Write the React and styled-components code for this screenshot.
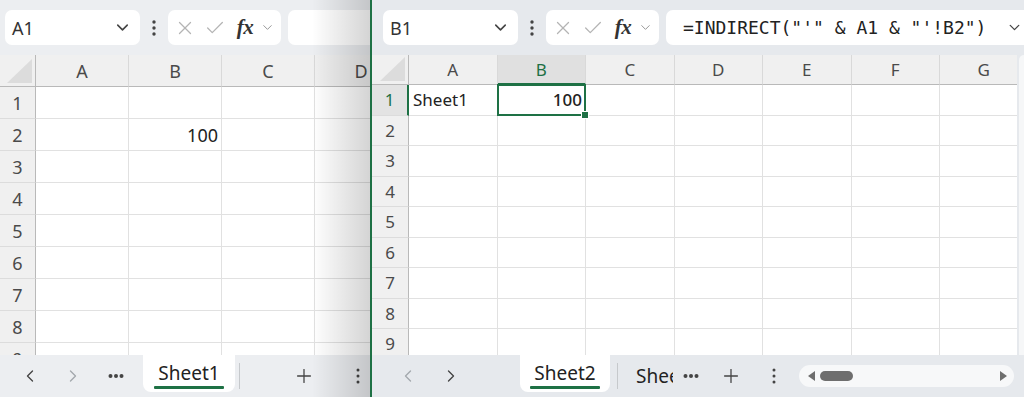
import React from "react";
import styled, { createGlobalStyle } from "styled-components";
import { ChevronDown, ChevronLeft, ChevronRight, X, Check, Plus } from "lucide-react";

const GREEN = "#1e7145";

const GlobalStyle = createGlobalStyle`
  html, body { margin: 0; padding: 0; }
  body {
    font-family: "Noto Sans", "Open Sans", sans-serif;
    background: #e7eaee;
    overflow: hidden;
  }
`;

const Screen = styled.div`
  display: flex;
  width: 1024px;
  height: 397px;
  overflow: hidden;
`;

const Window = styled.div`
  position: relative;
  display: flex;
  flex-direction: column;
  flex: none;
  width: ${(p) => p.$width}px;
  background: ${(p) => p.$bg};
  overflow: hidden;
`;

const Divider = styled.div`
  flex: none;
  width: 2px;
  background: ${GREEN};
`;

// shadow thrown by the window in front
const EdgeShade = styled.div`
  position: absolute;
  top: 0;
  right: 0;
  bottom: 0;
  width: 58px;
  background: linear-gradient(to right, rgba(0, 0, 0, 0), rgba(0, 0, 0, 0.17));
  pointer-events: none;
`;

const Toolbar = styled.div`
  flex: none;
  display: flex;
  align-items: center;
  height: 55px;
  padding: 10px 0 10px ${(p) => p.$pad}px;
  box-sizing: border-box;
`;

const NameBox = styled.div`
  flex: none;
  display: flex;
  align-items: center;
  justify-content: space-between;
  width: 135px;
  height: 35px;
  padding: 0 8px 0 7px;
  box-sizing: border-box;
  background: #fff;
  border-radius: 7px;
  font-size: 18px;
  color: #333;
`;

const KebabSlot = styled.div`
  flex: none;
  width: 28px;
  display: flex;
  justify-content: center;
  color: #444;
`;

const FormulaButtons = styled.div`
  flex: none;
  display: flex;
  align-items: center;
  width: 113px;
  height: 35px;
  padding: 0 4px;
  box-sizing: border-box;
  background: #fff;
  border-radius: 7px;
`;

const IconSlot = styled.div`
  width: ${(p) => p.$w}px;
  display: flex;
  justify-content: center;
  align-items: center;
  color: ${(p) => p.$color || "#b4b4b4"};
`;

const Fx = styled.span`
  font-family: "Liberation Serif", "DejaVu Serif", serif;
  font-style: italic;
  font-weight: bold;
  font-size: 21px;
  color: #333;
  letter-spacing: -0.5px;
`;

const FormulaInput = styled.div`
  flex: 1;
  min-width: 0;
  display: flex;
  align-items: center;
  justify-content: space-between;
  height: 35px;
  margin-left: 7px;
  padding: 0 0 0 17px;
  box-sizing: border-box;
  background: #fff;
  border-radius: 7px 0 0 7px;
  color: #555;
`;

const FormulaText = styled.span`
  font-family: "DejaVu Sans Mono", "Liberation Mono", monospace;
  font-size: 18px;
  color: #222;
  white-space: pre;
`;

const Body = styled.div`
  flex: 1;
  min-height: 0;
  display: flex;
`;

const Sheet = styled.div`
  flex: 1;
  min-width: 0;
  display: grid;
  overflow: hidden;
  align-content: start;
  grid-template-columns: ${(p) => p.$head}px repeat(${(p) => p.$cols}, ${(p) => p.$colW}px);
  grid-template-rows: ${(p) => p.$headH}px;
  grid-auto-rows: ${(p) => p.$rowH}px;
  background: #fff;
  font-size: ${(p) => p.$font}px;
`;

const VTrack = styled.div`
  flex: none;
  width: 5px;
  margin-left: 2px;
  background: #f6f7f8;
  border-radius: 8px 0 0 0;
`;

const Corner = styled.div`
  position: relative;
  background: #f0f0f0;
  border-right: 1px solid #b9b9b9;
  border-bottom: 1px solid #b9b9b9;

  &::after {
    content: "";
    position: absolute;
    right: 3px;
    bottom: 3px;
    width: 25px;
    height: 24px;
    background: #dcdcdc;
    clip-path: polygon(100% 0, 100% 100%, 0 100%);
  }
`;

const ColHead = styled.div`
  display: flex;
  align-items: center;
  justify-content: center;
  background: ${(p) => (p.$active ? "#e0e0e0" : "#f0f0f0")};
  color: ${(p) => (p.$active ? GREEN : "#4a4a4a")};
  border-right: 1px solid #d9d9d9;
  border-bottom: ${(p) => (p.$active ? `2px solid ${GREEN}` : "1px solid #b9b9b9")};
  box-sizing: border-box;
`;

const RowHead = styled.div`
  display: flex;
  align-items: center;
  justify-content: center;
  background: ${(p) => (p.$active ? "#e3e3e3" : "#f0f0f0")};
  color: ${(p) => (p.$active ? GREEN : "#4a4a4a")};
  border-right: ${(p) => (p.$active ? `2px solid ${GREEN}` : "1px solid #b9b9b9")};
  border-bottom: 1px solid #dcdcdc;
  box-sizing: border-box;
`;

const Cell = styled.div`
  position: relative;
  display: flex;
  align-items: center;
  justify-content: ${(p) => (p.$right ? "flex-end" : "flex-start")};
  padding: 0 3px 0 4px;
  border-right: 1px solid #e1e1e1;
  border-bottom: 1px solid #e1e1e1;
  box-sizing: border-box;
  color: #222;
  font-weight: ${(p) => (p.$bold ? 500 : 400)};
  white-space: nowrap;
  z-index: ${(p) => (p.$selected ? 2 : 0)};

  ${(p) =>
    p.$selected &&
    `
    &::after {
      content: "";
      position: absolute;
      inset: -1px -1px -1px -1px;
      border: 2px solid ${GREEN};
    }
    &::before {
      content: "";
      position: absolute;
      right: -4px;
      bottom: -4px;
      width: 6px;
      height: 6px;
      background: ${GREEN};
      border: 1px solid #fff;
      z-index: 3;
    }
  `}
`;

const TabBar = styled.div`
  flex: none;
  display: flex;
  align-items: center;
  height: 42px;
  padding-left: ${(p) => p.$pad}px;
  box-sizing: border-box;
  color: #444;
`;

const NavBtn = styled.div`
  flex: none;
  width: ${(p) => p.$w || 43}px;
  margin-left: ${(p) => p.$ml || 0}px;
  height: 30px;
  display: flex;
  align-items: center;
  justify-content: center;
  color: ${(p) => (p.$dim ? "#a3a8ad" : "#444")};
`;

const SheetTab = styled.div`
  flex: none;
  align-self: flex-start;
  position: relative;
  display: flex;
  justify-content: center;
  width: ${(p) => p.$w}px;
  height: 37px;
  margin-left: ${(p) => p.$ml}px;
  padding-top: 5px;
  box-sizing: border-box;
  background: #fff;
  border-radius: 0 0 8px 8px;
  font-size: 19px;
  color: #222;

  &::after {
    content: "";
    position: absolute;
    left: 50%;
    top: 31px;
    width: 70px;
    height: 3px;
    margin-left: -35px;
    background: ${GREEN};
    border-radius: 1px;
  }
`;

const Separator = styled.div`
  flex: none;
  width: 1px;
  height: 26px;
  margin-left: ${(p) => p.$ml}px;
  background: #c6c9cc;
`;

const ClippedTab = styled.div`
  flex: none;
  width: 37px;
  margin-left: ${(p) => p.$ml}px;
  overflow: hidden;
  white-space: nowrap;
  font-size: 19px;
  color: #222;
`;

const ScrollTrack = styled.div`
  flex: none;
  display: flex;
  align-items: center;
  width: 215px;
  height: 22px;
  margin-left: ${(p) => p.$ml}px;
  padding: 0 6px 0 8px;
  box-sizing: border-box;
  background: #f7f8f9;
  border-radius: 11px;
`;

const Thumb = styled.div`
  width: 33px;
  height: 10px;
  margin-left: 4px;
  background: #6e6e6e;
  border-radius: 5px;
`;

const Spacer = styled.div`
  flex: 1;
`;

const Dots = ({ vertical, size = 3 }) =>
  vertical ? (
    <svg width="6" height="18" viewBox="0 0 6 18">
      <circle cx="3" cy="3" r={size / 2 + 0.2} fill="currentColor" />
      <circle cx="3" cy="9" r={size / 2 + 0.2} fill="currentColor" />
      <circle cx="3" cy="15" r={size / 2 + 0.2} fill="currentColor" />
    </svg>
  ) : (
    <svg width="16" height="6" viewBox="0 0 16 6">
      <circle cx="2.5" cy="3" r="2" fill="currentColor" />
      <circle cx="8" cy="3" r="2" fill="currentColor" />
      <circle cx="13.5" cy="3" r="2" fill="currentColor" />
    </svg>
  );

const Triangle = ({ dir }) => (
  <svg width="9" height="12" viewBox="0 0 9 12">
    {dir === "left" ? (
      <path d="M8 1 L1 6 L8 11 Z" fill="#6e6e6e" />
    ) : (
      <path d="M1 1 L8 6 L1 11 Z" fill="#6e6e6e" />
    )}
  </svg>
);

const letters = (n) => "ABCDEFG".slice(0, n).split("");

const Grid = ({ cols, colW, head, headH, rowH, font, rows, activeCol, activeRow, data }) => (
  <Sheet $cols={cols} $colW={colW} $head={head} $headH={headH} $rowH={rowH} $font={font}>
    <Corner />
    {letters(cols).map((c) => (
      <ColHead key={c} $active={c === activeCol}>
        {c}
      </ColHead>
    ))}
    {Array.from({ length: rows }, (_, i) => i + 1).map((r) => (
      <React.Fragment key={r}>
        <RowHead $active={r === activeRow}>{r}</RowHead>
        {letters(cols).map((c) => {
          const d = data[c + r];
          return (
            <Cell key={c} $right={d && d.right} $bold={d && d.bold} $selected={d && d.selected}>
              {d && d.text}
            </Cell>
          );
        })}
      </React.Fragment>
    ))}
  </Sheet>
);

const FormulaBar = ({ name, pad, formula }) => (
  <Toolbar $pad={pad}>
    <NameBox>
      <span>{name}</span>
      <ChevronDown size={19} strokeWidth={2} color="#444" />
    </NameBox>
    <KebabSlot>
      <Dots vertical />
    </KebabSlot>
    <FormulaButtons>
      <IconSlot $w={26}>
        <X size={22} strokeWidth={1.4} />
      </IconSlot>
      <IconSlot $w={34}>
        <Check size={22} strokeWidth={1.4} />
      </IconSlot>
      <IconSlot $w={26} $color="#333">
        <Fx>fx</Fx>
      </IconSlot>
      <IconSlot $w={19} $color="#999">
        <ChevronDown size={15} strokeWidth={1.6} />
      </IconSlot>
    </FormulaButtons>
    <FormulaInput>
      <FormulaText>{formula}</FormulaText>
      {formula && (
        <IconSlot $w={20} $color="#444">
          <ChevronDown size={17} strokeWidth={1.8} />
        </IconSlot>
      )}
    </FormulaInput>
  </Toolbar>
);

const App = () => {
  return (
    <>
      <GlobalStyle />
      <Screen>
        <Window $width={370} $bg="#eceef1">
          <FormulaBar name="A1" pad={5} formula="" />
          <Body>
            <Grid
              cols={4}
              colW={93}
              head={36}
              headH={32}
              rowH={32}
              font={18}
              rows={9}
              data={{ B2: { text: "100", right: true } }}
            />
          </Body>
          <TabBar $pad={8}>
            <NavBtn>
              <ChevronLeft size={20} strokeWidth={1.6} />
            </NavBtn>
            <NavBtn $dim>
              <ChevronRight size={20} strokeWidth={1.6} />
            </NavBtn>
            <NavBtn>
              <Dots />
            </NavBtn>
            <SheetTab $w={92} $ml={6}>
              Sheet1
            </SheetTab>
            <Separator $ml={4} />
            <NavBtn $ml={42}>
              <Plus size={22} strokeWidth={1.4} />
            </NavBtn>
            <NavBtn $ml={11}>
              <Dots vertical size={2.6} />
            </NavBtn>
          </TabBar>
          <EdgeShade />
        </Window>
        <Divider />
        <Window $width={652} $bg="#e6e9ed">
          <FormulaBar name="B1" pad={11} formula={`=INDIRECT("'" & A1 & "'!B2")`} />
          <Body>
            <Grid
              cols={7}
              colW={88.5}
              head={37}
              headH={30}
              rowH={30.5}
              font={17}
              rows={10}
              activeCol="B"
              activeRow={1}
              data={{
                A1: { text: "Sheet1" },
                B1: { text: "100", right: true, bold: true, selected: true },
              }}
            />
            <VTrack />
          </Body>
          <TabBar $pad={14}>
            <NavBtn $dim>
              <ChevronLeft size={20} strokeWidth={1.6} />
            </NavBtn>
            <NavBtn>
              <ChevronRight size={20} strokeWidth={1.6} />
            </NavBtn>
            <SheetTab $w={90} $ml={48}>
              Sheet2
            </SheetTab>
            <Separator $ml={7} />
            <ClippedTab $ml={18}>Sheet3</ClippedTab>
            <NavBtn $w={36} $ml={0}>
              <Dots />
            </NavBtn>
            <NavBtn $w={44} $ml={0}>
              <Plus size={22} strokeWidth={1.4} />
            </NavBtn>
            <NavBtn $w={42} $ml={0}>
              <Dots vertical size={2.6} />
            </NavBtn>
            <ScrollTrack $ml={4}>
              <Triangle dir="left" />
              <Thumb />
              <Spacer />
              <Triangle dir="right" />
            </ScrollTrack>
          </TabBar>
        </Window>
      </Screen>
    </>
  );
};

export default App;
